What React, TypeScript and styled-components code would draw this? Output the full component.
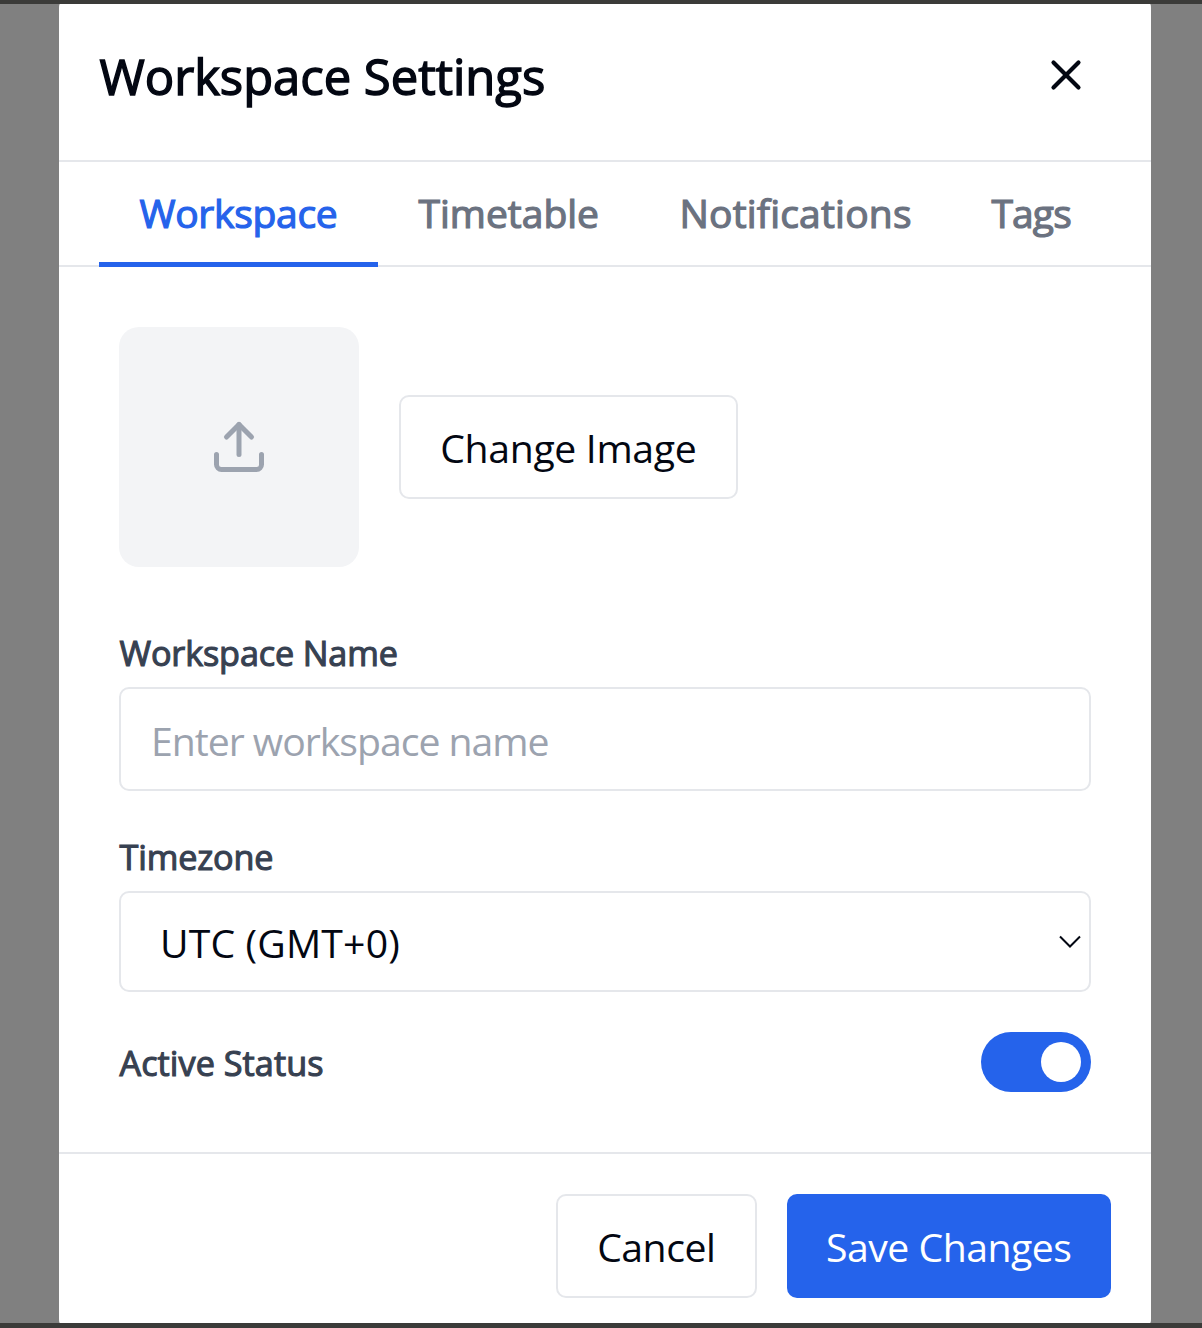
import React, { useState } from "react";
import styled, { createGlobalStyle } from "styled-components";
import { X } from "lucide-react";

const GlobalStyle = createGlobalStyle`
  *, *::before, *::after { box-sizing: border-box; }
  body {
    margin: 0;
    background: #808080;
    color: #030712;
    font-family: "Open Sans", "Noto Sans", sans-serif;
  }
  button, input { font: inherit; color: inherit; }
`;

const Backdrop = styled.div`
  display: flex;
  justify-content: center;
  height: 1328px;
  border-top: 4px solid #3b3b39;
  border-bottom: 5px solid #3b3b39;
  background: #808080;
  overflow: hidden;
`;

const Dialog = styled.section`
  display: flex;
  flex-direction: column;
  width: 1092px;
  height: 1319px;
  margin-left: 8px;
  background: #fff;
  border-radius: 1px / 4px;
`;

const Tracked = styled.span<{ $tracking: number }>`
  letter-spacing: ${(p) => p.$tracking}px;
  margin-right: ${(p) => -p.$tracking}px;
  white-space: nowrap;
`;

const Header = styled.header`
  display: flex;
  align-items: flex-start;
  justify-content: space-between;
  height: 158px;
  padding: 36px 60px 0 40px;
  border-bottom: 2px solid #e5e7eb;
`;

const Title = styled.h2`
  margin: 0;
  padding-left: 0.5px;
  font-size: 49px;
  font-weight: 400;
  line-height: 72px;
  -webkit-text-stroke: 1.4px currentColor;
`;

const CloseButton = styled.button`
  display: flex;
  padding: 10px 0;
  border: 0;
  background: none;
`;

const TabBar = styled.nav`
  display: flex;
  height: 105px;
  padding: 0 40px;
  border-bottom: 2px solid #e5e7eb;
`;

const Tab = styled.button<{ $active: boolean; $width: number }>`
  width: ${(p) => p.$width}px;
  height: 105px;
  padding: 2px 0 0 40.5px;
  border: 0;
  border-bottom: 5px solid ${(p) => (p.$active ? "#2563eb" : "transparent")};
  background: none;
  color: ${(p) => (p.$active ? "#2563eb" : "#6b7280")};
  font-size: 39px;
  line-height: 60px;
  text-align: left;
  -webkit-text-stroke: 1.2px currentColor;
`;

const Content = styled.div`
  display: flex;
  flex-direction: column;
  height: 885px;
  padding: 60px 60px 0;
`;

const ImageRow = styled.div`
  display: flex;
  align-items: center;
  gap: 40px;
  margin-bottom: 61px;
`;

const ImagePreview = styled.div`
  display: grid;
  place-items: center;
  width: 240px;
  height: 240px;
  border-radius: 20px;
  background: #f3f4f6;
  color: #9ca3af;
`;

const Button = styled.button<{ $primary?: boolean; $width: number }>`
  width: ${(p) => p.$width}px;
  height: 104px;
  padding: 2px 0 0;
  border: ${(p) => (p.$primary ? "0" : "2px solid #e5e7eb")};
  border-radius: 10px;
  background: ${(p) => (p.$primary ? "#2563eb" : "#fff")};
  color: ${(p) => (p.$primary ? "#fff" : "#030712")};
  font-size: 39.2px;
  line-height: 60px;
`;

const Label = styled.label`
  height: 59px;
  padding-left: 0.5px;
  color: #374151;
  font-size: 34.2px;
  line-height: 50px;
  -webkit-text-stroke: 1.1px currentColor;
`;

const TextInput = styled.input`
  height: 104px;
  margin-bottom: 41px;
  padding: 2px 30px 0;
  border: 2px solid #e5e7eb;
  border-radius: 10px;
  background: #fff;
  font-size: 39.2px;
  letter-spacing: -1.02px;
  outline: none;
  &::placeholder { color: #9ca3af; opacity: 1; }
`;

const SelectBox = styled.div`
  display: flex;
  align-items: center;
  justify-content: space-between;
  height: 101px;
  margin-bottom: 40px;
  padding: 2px 7px 0 39px;
  border: 2px solid #e5e7eb;
  border-radius: 10px;
  font-size: 39.2px;
`;

const Chevron = styled.svg`
  margin-bottom: 2px;
`;

const StatusRow = styled.div`
  display: flex;
  align-items: center;
  justify-content: space-between;
  height: 60px;
`;

const StatusLabel = styled(Label)`
  height: auto;
  padding-top: 2px;
`;

const Toggle = styled.button<{ $on: boolean }>`
  display: flex;
  align-items: center;
  justify-content: ${(p) => (p.$on ? "flex-end" : "flex-start")};
  width: 110px;
  height: 60px;
  padding: 10px;
  border: 0;
  border-radius: 30px;
  background: ${(p) => (p.$on ? "#2563eb" : "#e5e7eb")};
`;

const Knob = styled.span`
  width: 40px;
  height: 40px;
  border-radius: 50%;
  background: #fff;
`;

const Footer = styled.footer`
  display: flex;
  justify-content: flex-end;
  gap: 30px;
  padding: 40px 40px 25px;
  border-top: 2px solid #e5e7eb;
`;

const tabs = [
  { name: "Workspace", width: 279, tracking: -0.3 },
  { name: "Timetable", width: 261, tracking: 0 },
  { name: "Notifications", width: 312, tracking: 0.2 },
  { name: "Tags", width: 160, tracking: -0.9 },
];

export default function App() {
  const [active, setActive] = useState("Workspace");
  const [on, setOn] = useState(true);

  return (
    <>
      <GlobalStyle />
      <Backdrop>
        <Dialog role="dialog" aria-label="Workspace Settings">
          <Header>
            <Title>
              <Tracked $tracking={-0.04}>Workspace Settings</Tracked>
            </Title>
            <CloseButton aria-label="Close">
              <X size={50} strokeWidth={2} />
            </CloseButton>
          </Header>
          <TabBar>
            {tabs.map((t) => (
              <Tab
                key={t.name}
                $active={t.name === active}
                $width={t.width}
                onClick={() => setActive(t.name)}
              >
                <Tracked $tracking={t.tracking}>{t.name}</Tracked>
              </Tab>
            ))}
          </TabBar>
          <Content>
            <ImageRow>
              <ImagePreview>
                <svg
                  width="60"
                  height="60"
                  viewBox="0 0 24 24"
                  fill="none"
                  stroke="currentColor"
                  strokeWidth="2"
                  strokeLinecap="round"
                  strokeLinejoin="round"
                >
                  <path d="M21 15v4a2 2 0 0 1-2 2H5a2 2 0 0 1-2-2v-4" />
                  <polyline points="17 8 12 3 7 8" />
                  <line x1="12" y1="3" x2="12" y2="15" />
                </svg>
              </ImagePreview>
              <Button $width={339}>
                <Tracked $tracking={-0.35}>Change Image</Tracked>
              </Button>
            </ImageRow>
            <Label htmlFor="workspace-name">
              <Tracked $tracking={-0.15}>Workspace Name</Tracked>
            </Label>
            <TextInput id="workspace-name" placeholder="Enter workspace name" />
            <Label>
              <Tracked $tracking={-0.15}>Timezone</Tracked>
            </Label>
            <SelectBox role="combobox">
              <Tracked $tracking={0.15}>UTC (GMT+0)</Tracked>
              <Chevron width="24" height="14" viewBox="0 0 24 14" fill="none">
                <path d="M2 1.5 L12 11.5 L22 1.5" stroke="#030712" strokeWidth="2" />
              </Chevron>
            </SelectBox>
            <StatusRow>
              <StatusLabel>
                <Tracked $tracking={0.05}>Active Status</Tracked>
              </StatusLabel>
              <Toggle $on={on} role="switch" aria-checked={on} onClick={() => setOn(!on)}>
                <Knob />
              </Toggle>
            </StatusRow>
          </Content>
          <Footer>
            <Button $width={201}>
              <Tracked $tracking={-0.5}>Cancel</Tracked>
            </Button>
            <Button $primary $width={324}>
              <Tracked $tracking={-0.5}>Save Changes</Tracked>
            </Button>
          </Footer>
        </Dialog>
      </Backdrop>
    </>
  );
}
